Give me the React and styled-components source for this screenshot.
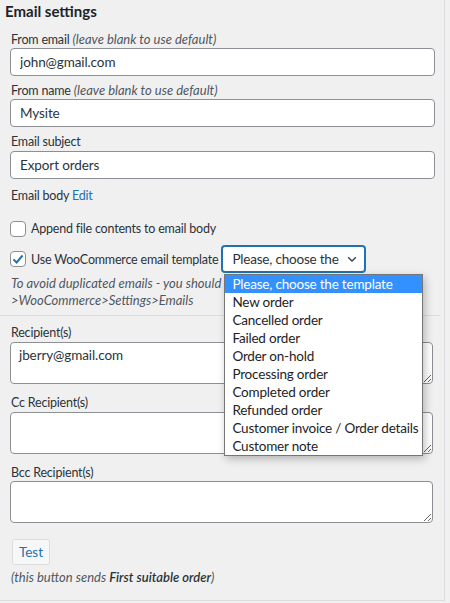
import React, { useState } from 'react';
import styled, { createGlobalStyle } from 'styled-components';

const GlobalStyle = createGlobalStyle`
  body {
    margin: 0;
    background: #f0f0f1;
    font-family: Lato, "Open Sans", sans-serif;
    font-size: 12.5px;
    letter-spacing: -0.2px;
    color: #1d2327;
  }
`;

const Panel = styled.div`
  width: 445px;
  height: 601px;
  box-sizing: border-box;
  border-right: 1px solid #dcdcde;
  border-bottom: 1px solid #dcdcde;
  background: #f0f0f1;
  padding: 2px 0 0 0;
`;

const Section = styled.div`
  padding: 0 10px;
`;

const Heading = styled.h3`
  margin: 0 0 11px -5px;
  font-size: 15px;
  letter-spacing: 0;
  line-height: 18px;
  font-weight: 700;
  color: #1d2327;
`;

const Label = styled.div`
  line-height: 17px;
  margin: 0 0 ${p => p.$gap || 0}px 1px;
  color: #2c3338;

  em {
    font-size: 13px;
    letter-spacing: 0;
    color: #50575e;
  }
`;

const TextInput = styled.input`
  display: block;
  box-sizing: border-box;
  width: 425px;
  height: 28px;
  margin: 0 0 6px;
  padding: 0 9px;
  border: 1px solid #8c8f94;
  border-radius: 4px;
  background: #fff;
  font: inherit;
  font-size: 13.5px;
  letter-spacing: -0.1px;
  color: #2c3338;
  outline: none;
`;

const Area = styled.textarea`
  display: block;
  box-sizing: border-box;
  width: 423px;
  height: 42px;
  margin: 0 0 ${p => p.$gap || 0}px;
  padding: 2px 8px;
  border: 1px solid #8c8f94;
  border-radius: 4px;
  background: #fff;
  font: inherit;
  font-size: 13.5px;
  letter-spacing: -0.1px;
  line-height: 20px;
  color: #2c3338;
  resize: vertical;
  outline: none;
`;

const BodyLine = styled.div`
  line-height: 17px;
  margin: 8px 0 0 1px;
  color: #2c3338;
`;

const Link = styled.a`
  color: #2271b1;
  text-decoration: none;
`;

const CheckRow = styled.label`
  display: flex;
  align-items: center;
  gap: 5px;
  height: ${p => p.$h || 17}px;
  margin-top: ${p => p.$top || 0}px;
  color: #2c3338;
  position: relative;
`;

const Box = styled.span`
  width: 16px;
  height: 16px;
  box-sizing: border-box;
  border: 1px solid #8c8f94;
  border-radius: 4px;
  background: #fff;
  display: inline-flex;
  align-items: center;
  justify-content: center;
  flex: none;
`;

const SelectWrap = styled.div`
  position: relative;
  margin-left: -1px;
`;

const SelectBox = styled.div`
  box-sizing: border-box;
  width: 143px;
  height: 26px;
  display: flex;
  align-items: center;
  gap: 6px;
  padding: 0 0 0 9px;
  border: 1px solid #2271b1;
  box-shadow: 0 0 0 1px #2271b1;
  border-radius: 3px;
  background: #fff;
  font-size: 13.5px;
  color: #2c3338;
  white-space: nowrap;
  overflow: hidden;
`;

const Menu = styled.ul`
  position: absolute;
  top: 28px;
  left: 2px;
  width: 197px;
  margin: 0;
  padding: 0;
  list-style: none;
  background: #fff;
  border: 1px solid #767676;
  box-shadow: 2px 3px 8px rgba(0, 0, 0, 0.25);
  z-index: 5;
`;

const Option = styled.li`
  height: 18px;
  line-height: 18px;
  padding: 0 7px;
  font-size: 13.5px;
  white-space: nowrap;
  background: ${p => (p.$active ? '#3391ff' : '#fff')};
  color: ${p => (p.$active ? '#fff' : '#1d2327')};
`;

const Note = styled.div`
  font-style: italic;
  font-size: 13px;
  letter-spacing: 0;
  line-height: 17px;
  color: #50575e;
  margin: ${p => p.$top || 0}px 0 0 1px;

  b {
    font-weight: 600;
    color: #2c3338;
  }
`;

const Rule = styled.hr`
  border: 0;
  border-top: 1px solid #dcdcde;
  width: 440px;
  margin: 6px 0 8px;
`;

const TestButton = styled.button`
  box-sizing: border-box;
  width: 38px;
  height: 26px;
  margin: 16px 0 4px 2px;
  padding: 0;
  border: 1px solid #dcdcde;
  border-radius: 3px;
  background: #f6f7f7;
  color: #2271b1;
  font: inherit;
  font-size: 13.5px;
`;

const Chevron = () => (
  <svg width="14" height="14" viewBox="0 0 20 20" style={{ flex: 'none' }}>
    <path d="M4.5 7.5l5.5 5.5 5.5-5.5" fill="none" stroke="#3c434a" strokeWidth="2" />
  </svg>
);

const Tick = () => (
  <svg width="14" height="14" viewBox="0 0 20 20">
    <path d="M3.5 10.5l4.5 4.5 8.5-10" fill="none" stroke="#2271b1" strokeWidth="2.8" />
  </svg>
);

const templates = [
  'Please, choose the template',
  'New order',
  'Cancelled order',
  'Failed order',
  'Order on-hold',
  'Processing order',
  'Completed order',
  'Refunded order',
  'Customer invoice / Order details',
  'Customer note',
];

const App = () => {
  const [active] = useState(0);

  return (
    <>
      <GlobalStyle />
      <Panel>
        <Section>
          <Heading>Email settings</Heading>

          <Label>From email <em>(leave blank to use default)</em></Label>
          <TextInput defaultValue="john@gmail.com" />

          <Label>From name <em>(leave blank to use default)</em></Label>
          <TextInput defaultValue="Mysite" />

          <Label $gap={1}>Email subject</Label>
          <TextInput defaultValue="Export orders" />

          <BodyLine>Email body <Link href="#">Edit</Link></BodyLine>

          <CheckRow $top={16}>
            <Box />
            Append file contents to email body
          </CheckRow>

          <CheckRow $top={9} $h={26}>
            <Box><Tick /></Box>
            Use WooCommerce email template
            <SelectWrap>
              <SelectBox>
                Please, choose the
                <Chevron />
              </SelectBox>
              <Menu>
                {templates.map((t, i) => (
                  <Option key={t} $active={i === active}>{t}</Option>
                ))}
              </Menu>
            </SelectWrap>
          </CheckRow>

          <Note $top={3}>To avoid duplicated emails - you should</Note>
          <Note>&gt;WooCommerce&gt;Settings&gt;Emails</Note>
        </Section>

        <Rule />

        <Section>
          <Label $gap={1}>Recipient(s)</Label>
          <Area $gap={10} defaultValue="jberry@gmail.com" spellCheck={false} />

          <Label $gap={1}>Cc Recipient(s)</Label>
          <Area $gap={10} />

          <Label $gap={0}>Bcc Recipient(s)</Label>
          <Area />

          <TestButton>Test</TestButton>
          <Note>(this button sends <b>First suitable order</b>)</Note>
        </Section>
      </Panel>
    </>
  );
};

export default App;
